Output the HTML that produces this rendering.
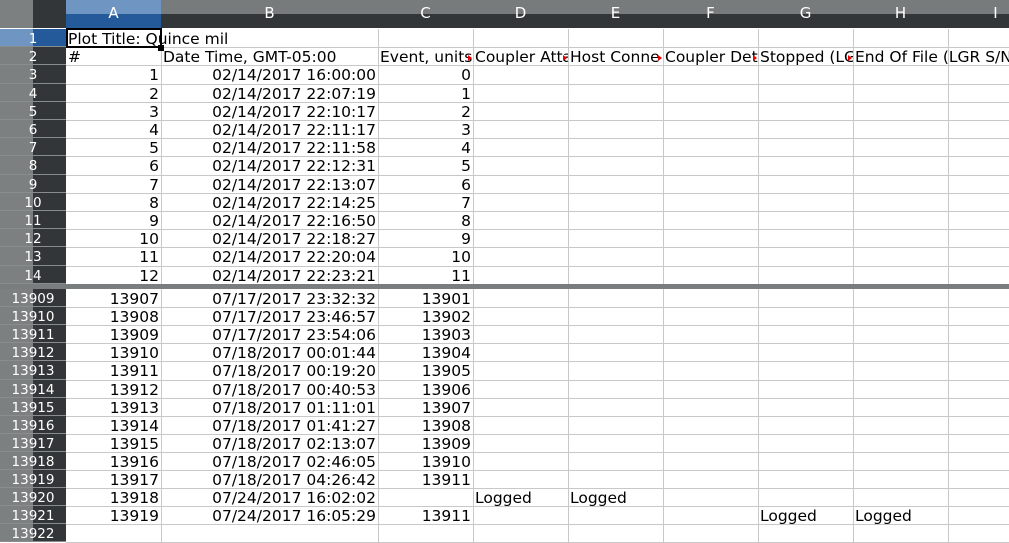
<!DOCTYPE html>
<html><head><meta charset="utf-8"><style>
body{margin:0;width:1009px;height:539px;overflow:hidden;background:#fff;font-family:"DejaVu Sans","Liberation Sans",sans-serif;position:relative}
.ch{position:absolute;top:0;height:28px;border-right:1px solid #8a8d8e;box-sizing:border-box;background:linear-gradient(#777b7c 0,#777b7c 14px,#333638 14px);color:#fff;font-size:15px;text-align:center;line-height:28px}
.ch span{position:relative;top:-1px}
.rh{position:absolute;left:0;width:66px;box-sizing:border-box;background:linear-gradient(90deg,#7c8081 0,#7c8081 33px,#333638 33px);color:#fff;font-size:13.5px;text-align:center;border-bottom:1px solid #8a8d8e;overflow:hidden}
.rh span{position:relative;top:1px}
.c{position:absolute;box-sizing:border-box;border-right:1px solid #c8c8c8;border-bottom:1px solid #c8c8c8;font-size:15.5px;color:#000;white-space:nowrap;overflow:hidden;padding:0 2px}
.c span{position:relative;top:1px}
.r{text-align:right}
.tri{position:absolute;width:0;height:0;border-top:3px solid transparent;border-bottom:3px solid transparent;border-left:4px solid #e00}
</style></head><body>
<div id="g"></div>
<script>
(function(){
var cols=[[66,161,'A'],[161,378,'B'],[378,473,'C'],[473,568,'D'],[568,663,'E'],[663,758,'F'],[758,853,'G'],[853,948,'H'],[948,1043,'I']];
var h='';
cols.forEach(function(c,i){h+='<div class="ch" style="left:'+c[0]+'px;width:'+(c[1]-c[0]+1)+'px;'+(i==0?'background:linear-gradient(#6f95c3 0,#6f95c3 14px,#245a9a 14px);':'')+'"><span>'+c[2]+'</span></div>';});
h+='<div class="ch" style="left:0;width:66px;border-right:none;background:linear-gradient(90deg,#7c8081 0,#7c8081 33px,#333638 33px)"></div>';
var topRows=[
[1,[]],
[2,['#','Date Time, GMT-05:00','Event, units','Coupler Atta','Host Conne','Coupler Det','Stopped (LG','End Of File (LGR S/N']]];
var d1=['16:00:00','22:07:19','22:10:17','22:11:17','22:11:58','22:12:31','22:13:07','22:14:25','22:16:50','22:18:27','22:20:04','22:23:21'];
for(var i=0;i<12;i++)topRows.push([i+3,[String(i+1),'02/14/2017 '+d1[i],String(i)]]);
var bot=[
[13909,'13907','07/17/2017 23:32:32','13901'],[13910,'13908','07/17/2017 23:46:57','13902'],[13911,'13909','07/17/2017 23:54:06','13903'],
[13912,'13910','07/18/2017 00:01:44','13904'],[13913,'13911','07/18/2017 00:19:20','13905'],[13914,'13912','07/18/2017 00:40:53','13906'],
[13915,'13913','07/18/2017 01:11:01','13907'],[13916,'13914','07/18/2017 01:41:27','13908'],[13917,'13915','07/18/2017 02:13:07','13909'],
[13918,'13916','07/18/2017 02:46:05','13910'],[13919,'13917','07/18/2017 04:26:42','13911'],[13920,'13918','07/24/2017 16:02:02','','Logged','Logged'],
[13921,'13919','07/24/2017 16:05:29','13911','','','','Logged','Logged'],[13922]];
function row(y,hgt,label,vals,sel){
 h+='<div class="rh" style="top:'+y+'px;height:'+hgt+'px;line-height:'+hgt+'px;'+(sel?'background:linear-gradient(90deg,#6f95c3 0,#6f95c3 33px,#245a9a 33px);':'')+'"><span>'+label+'</span></div>';
 cols.forEach(function(c,j){
  var v=vals[j]||'';var right=(j<3&&label!=2&&label!=1)?' r':'';
  var ov=(label==2&&j==7)?'overflow:visible;z-index:2;':'';
  h+='<div class="c'+right+'" style="'+ov+'left:'+c[0]+'px;top:'+y+'px;width:'+(c[1]-c[0]+1)+'px;height:'+(hgt+1)+'px;line-height:'+hgt+'px"><span>'+v+'</span></div>';
 });
}
topRows.forEach(function(r,i){
 var y=Math.round(29+i*18.2);var y2=Math.round(29+(i+1)*18.2);
 row(y,y2-y,r[0],r[1],r[0]==1);
});
h+='<div style="position:absolute;left:68px;top:30px;height:18px;line-height:18px;font-size:15.5px;white-space:nowrap;z-index:3">Plot Title: Quince mil</div>';
h+='<div style="position:absolute;left:66px;top:28px;width:96px;height:20px;box-sizing:border-box;border:2px solid #000;z-index:4"></div>';
h+='<div style="position:absolute;left:158px;top:45px;width:6px;height:6px;background:#000;z-index:4"></div>';
h+='<div style="position:absolute;left:0;top:284px;width:1009px;height:5px;background:#7a7d7e"></div>';
bot.forEach(function(r,i){
 var y=Math.round(289+i*18.1);var y2=Math.round(289+(i+1)*18.1);
 row(y,y2-y,r[0],r.slice(1),false);
});
[472,567,662,757,852].forEach(function(x){h+='<div class="tri" style="z-index:3;left:'+(x-4)+'px;top:55px"></div>';});
document.getElementById('g').innerHTML=h;
})();
</script>
</body></html>
